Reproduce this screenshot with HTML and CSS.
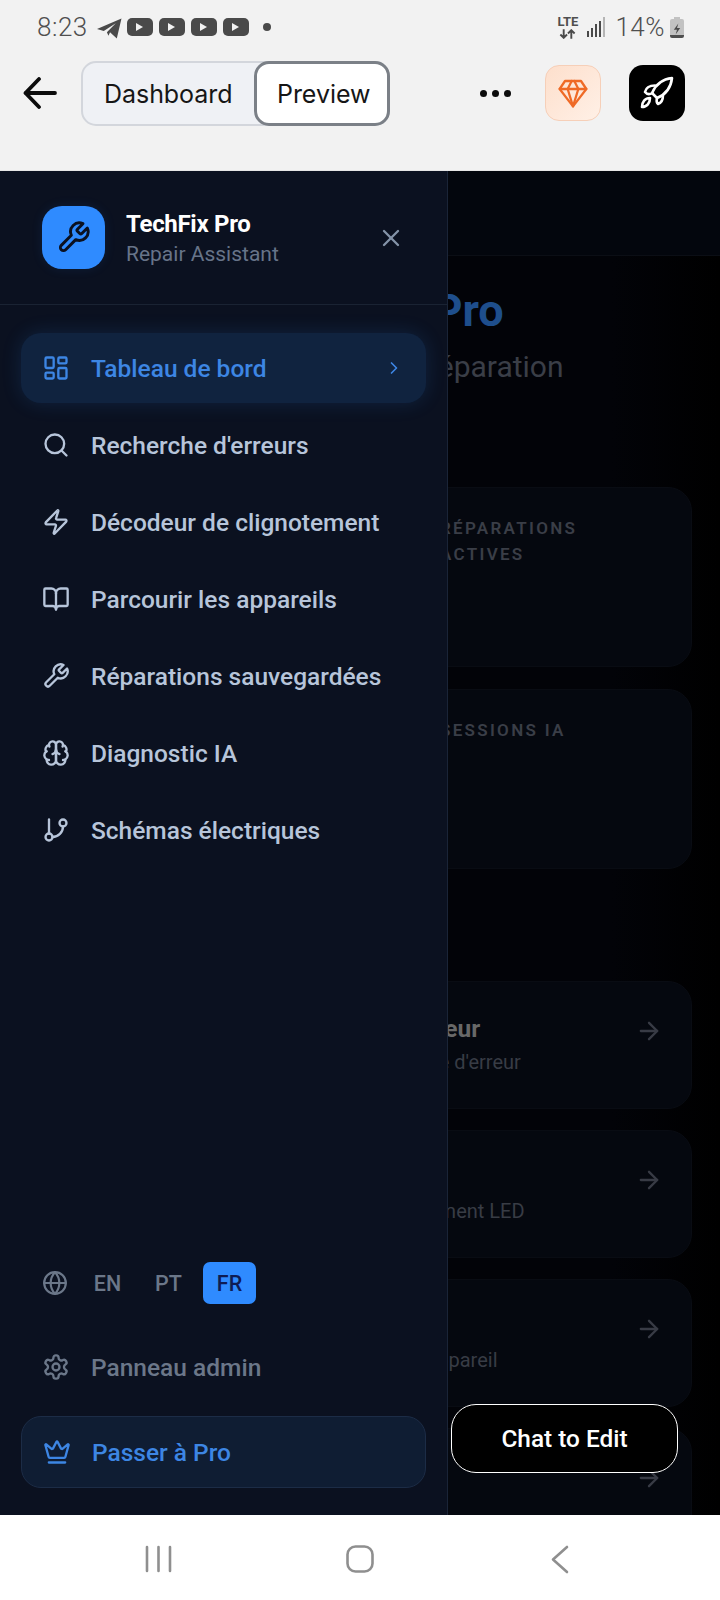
FILE: index.html
```html
<!DOCTYPE html>
<html lang="fr">
<head>
    <meta charset="UTF-8">
    <meta name="viewport" content="width=device-width, initial-scale=1.0">
    <title>TechFix Pro</title>
    <link rel="stylesheet" href="styles.css">
</head>
<body>
    <svg class="sprites" width="0" height="0">
        <symbol id="i-dashboard" viewBox="0 0 24 24"><rect x="3" y="3" width="7" height="9" rx="1"/><rect x="14" y="3" width="7" height="5" rx="1"/><rect x="14" y="12" width="7" height="9" rx="1"/><rect x="3" y="16" width="7" height="5" rx="1"/></symbol>
        <symbol id="i-search" viewBox="0 0 24 24"><circle cx="11" cy="11" r="8"/><path d="m21 21-4.3-4.3"/></symbol>
        <symbol id="i-zap" viewBox="0 0 24 24"><path d="M4 14a1 1 0 0 1-.78-1.63l9.9-10.2a.5.5 0 0 1 .86.46l-1.92 6.02A1 1 0 0 0 13 10h7a1 1 0 0 1 .78 1.63l-9.9 10.2a.5.5 0 0 1-.86-.46l1.92-6.02A1 1 0 0 0 11 14z"/></symbol>
        <symbol id="i-book" viewBox="0 0 24 24"><path d="M12 7v14"/><path d="M3 18a1 1 0 0 1-1-1V4a1 1 0 0 1 1-1h5a4 4 0 0 1 4 4 4 4 0 0 1 4-4h5a1 1 0 0 1 1 1v13a1 1 0 0 1-1 1h-6a3 3 0 0 0-3 3 3 3 0 0 0-3-3z"/></symbol>
        <symbol id="i-wrench" viewBox="0 0 24 24"><path d="M14.7 6.3a1 1 0 0 0 0 1.4l1.6 1.6a1 1 0 0 0 1.4 0l3.77-3.77a6 6 0 0 1-7.94 7.94l-6.91 6.91a2.12 2.12 0 0 1-3-3l6.91-6.91a6 6 0 0 1 7.94-7.94l-3.76 3.76z"/></symbol>
        <symbol id="i-brain" viewBox="0 0 24 24"><path d="M12 5a3 3 0 1 0-5.997.125 4 4 0 0 0-2.526 5.77 4 4 0 0 0 .556 6.588A4 4 0 1 0 12 18Z"/><path d="M12 5a3 3 0 1 1 5.997.125 4 4 0 0 1 2.526 5.77 4 4 0 0 1-.556 6.588A4 4 0 1 1 12 18Z"/><path d="M15 13a4.5 4.5 0 0 1-3-4 4.5 4.5 0 0 1-3 4"/><path d="M17.599 6.5a3 3 0 0 0 .399-1.375"/><path d="M6.003 5.125A3 3 0 0 0 6.401 6.5"/><path d="M3.477 10.896a4 4 0 0 1 .585-.396"/><path d="M19.938 10.5a4 4 0 0 1 .585.396"/><path d="M6 18a4 4 0 0 1-1.967-.516"/><path d="M19.967 17.484A4 4 0 0 1 18 18"/></symbol>
        <symbol id="i-branch" viewBox="0 0 24 24"><path d="M6 3v12"/><circle cx="18" cy="6" r="3"/><circle cx="6" cy="18" r="3"/><path d="M18 9a9 9 0 0 1-9 9"/></symbol>
        <symbol id="i-arrow" viewBox="0 0 24 24"><path d="M5 12h14"/><path d="m12 5 7 7-7 7"/></symbol>
    </svg>

    <header class="top">
        <div class="status">
            <div class="status-left">
                <span class="clock">8:23</span>
                <svg class="tg" viewBox="0 0 24 20"><path d="M0 10.500 23.500 0.500 19 19.500 12.500 13.500 11 17 9.500 13.500 18 5 6.500 12.500z"/></svg>
                <span class="yt"></span>
                <span class="yt"></span>
                <span class="yt"></span>
                <span class="yt"></span>
                <span class="dot"></span>
            </div>
            <div class="status-right">
                <span class="lte">LTE
                    <svg class="lte-arrows" viewBox="0 0 20 10"><path d="M6 0v9M2.500 5.500 6 9l3.500-3.500M14 10V1M10.500 4.500 14 1l3.500 3.500"/></svg>
                </span>
                <span class="bars"><i></i><i></i><i></i><i></i><i></i></span>
                <span class="clock">14%</span>
                <span class="battery"><svg viewBox="0 0 14 21"><path d="M8.500 5 3.500 12H7l-1.500 5 5-7H7z"/></svg></span>
            </div>
        </div>
        <div class="toolbar">
            <svg class="back" viewBox="0 0 34 32"><path d="M32 16H3"/><path d="M16 2 2.500 16 16 30"/></svg>
            <div class="tabs">
                <span class="tab">Dashboard</span>
                <span class="tab tab-on">Preview</span>
            </div>
            <div class="more"><i></i><i></i><i></i></div>
            <span class="square gem">
                <svg class="icon" viewBox="0 0 24 24"><path d="M6 3h12l4 6-10 13L2 9Z"/><path d="M11 3 8 9l4 13 4-13-3-6"/><path d="M2 9h20"/></svg>
            </span>
            <span class="square rocket">
                <svg class="icon" viewBox="0 0 34 34"><path d="M32 2C22 3 16 8 12 17l5 5c10-4 14-11 15-20z"/><path d="M15 9.500C10 9.500 6 11.500 5 16c2 2.500 5 2.500 7.500 1"/><path d="M17 22c-.5 2-1 4.500 1 6 3-1 5-4.500 5-9"/><path d="M10 22c-5 0-8 4-8 9 5 0 8-4 8-9z"/></svg>
            </span>
        </div>
    </header>

    <div class="stage">
        <div class="page">
            <div class="page-bar"></div>
            <div class="page-body">
                <h1 class="brand">TechFix <span>Pro</span></h1>
                <p class="tagline">Votre assistant de réparation</p>

                <div class="stat-card"><div class="stat-label">Réparations<br>actives</div></div>
                <div class="stat-card"><div class="stat-label">Sessions IA</div></div>

                <div class="action-list">
                    <div class="action-card">
                        <div class="action-text"><strong>Recherche d'erreur</strong><span>Recherche par code d'erreur</span></div>
                        <svg class="icon action-arrow"><use href="#i-arrow"/></svg>
                    </div>
                    <div class="action-card">
                        <div class="action-text"><strong>Décodeur</strong><span>Décodage clignotement LED</span></div>
                        <svg class="icon action-arrow"><use href="#i-arrow"/></svg>
                    </div>
                    <div class="action-card">
                        <div class="action-text"><strong>Appareils</strong><span>Sélectionner son appareil</span></div>
                        <svg class="icon action-arrow"><use href="#i-arrow"/></svg>
                    </div>
                    <div class="action-card">
                        <svg class="icon action-arrow"><use href="#i-arrow"/></svg>
                    </div>
                </div>
            </div>
        </div>

        <aside class="drawer">
            <div class="drawer-head">
                <span class="logo"><svg class="icon"><use href="#i-wrench"/></svg></span>
                <div class="drawer-title">
                    <strong>TechFix Pro</strong>
                    <span>Repair Assistant</span>
                </div>
                <svg class="icon close" viewBox="0 0 24 24"><path d="M18 6 6 18"/><path d="m6 6 12 12"/></svg>
            </div>

            <nav class="menu">
                <a class="menu-item active">
                    <svg class="icon"><use href="#i-dashboard"/></svg>
                    <span>Tableau de bord</span>
                    <svg class="icon chevron" viewBox="0 0 24 24"><path d="m9 18 6-6-6-6"/></svg>
                </a>
                <a class="menu-item"><svg class="icon"><use href="#i-search"/></svg><span>Recherche d'erreurs</span></a>
                <a class="menu-item"><svg class="icon"><use href="#i-zap"/></svg><span>Décodeur de clignotement</span></a>
                <a class="menu-item"><svg class="icon"><use href="#i-book"/></svg><span>Parcourir les appareils</span></a>
                <a class="menu-item"><svg class="icon"><use href="#i-wrench"/></svg><span>Réparations sauvegardées</span></a>
                <a class="menu-item"><svg class="icon"><use href="#i-brain"/></svg><span>Diagnostic IA</span></a>
                <a class="menu-item"><svg class="icon"><use href="#i-branch"/></svg><span>Schémas électriques</span></a>
            </nav>

            <div class="drawer-foot">
                <div class="langs">
                    <svg class="icon" viewBox="0 0 24 24"><circle cx="12" cy="12" r="10"/><path d="M12 2a14.500 14.500 0 0 0 0 20 14.500 14.500 0 0 0 0-20"/><path d="M2 12h20"/></svg>
                    <span class="lang">EN</span>
                    <span class="lang">PT</span>
                    <span class="lang lang-on">FR</span>
                </div>
                <a class="menu-item admin">
                    <svg class="icon" viewBox="0 0 24 24"><path d="M12.220 2h-.44a2 2 0 0 0-2 2v.18a2 2 0 0 1-1 1.730l-.43.25a2 2 0 0 1-2 0l-.15-.08a2 2 0 0 0-2.730.73l-.22.38a2 2 0 0 0 .73 2.730l.15.1a2 2 0 0 1 1 1.720v.51a2 2 0 0 1-1 1.740l-.15.09a2 2 0 0 0-.73 2.730l.22.38a2 2 0 0 0 2.730.73l.15-.08a2 2 0 0 1 2 0l.43.25a2 2 0 0 1 1 1.730V20a2 2 0 0 0 2 2h.44a2 2 0 0 0 2-2v-.18a2 2 0 0 1 1-1.730l.43-.25a2 2 0 0 1 2 0l.15.08a2 2 0 0 0 2.730-.73l.22-.39a2 2 0 0 0-.73-2.730l-.15-.08a2 2 0 0 1-1-1.740v-.5a2 2 0 0 1 1-1.740l.15-.09a2 2 0 0 0 .73-2.730l-.22-.38a2 2 0 0 0-2.730-.73l-.15.08a2 2 0 0 1-2 0l-.43-.25a2 2 0 0 1-1-1.730V4a2 2 0 0 0-2-2z"/><circle cx="12" cy="12" r="3"/></svg>
                    <span>Panneau admin</span>
                </a>
                <a class="menu-item upgrade">
                    <svg class="icon" viewBox="0 0 24 24"><path d="M11.562 3.266a.5.5 0 0 1 .876 0L15.390 8.870a1 1 0 0 0 1.516.294L21.183 5.500a.5.5 0 0 1 .798.519l-2.834 10.246a1 1 0 0 1-.956.734H5.810a1 1 0 0 1-.957-.734L2.020 6.020a.5.5 0 0 1 .798-.519l4.276 3.664a1 1 0 0 0 1.516-.294z"/><path d="M5 21h14"/></svg>
                    <span>Passer à Pro</span>
                </a>
            </div>
        </aside>

        <button class="chat">Chat to Edit</button>
    </div>

    <footer class="navbar">
        <svg width="27" height="28" viewBox="0 0 27 28"><path d="M2 2v24M13.500 2v24M25 2v24"/></svg>
        <svg class="nav-home" width="28" height="28" viewBox="0 0 28 28"><rect x="1.500" y="1.500" width="25" height="25" rx="8"/></svg>
        <svg width="18" height="29" viewBox="0 0 18 29"><path d="M16 2 2 14.500 16 27"/></svg>
    </footer>
</body>
</html>
```

FILE: styles.css
```css
* {
    box-sizing: border-box;
}
body {
    margin: 0;
    width: 720px;
    height: 1600px;
    display: flex;
    flex-direction: column;
    overflow: hidden;
    font-family: Roboto, "Liberation Sans", sans-serif;
    background-color: #fff;
}
.sprites {
    position: absolute;
}
.icon {
    width: 28px;
    height: 28px;
    flex: none;
    fill: none;
    stroke: currentColor;
    stroke-width: 2;
    stroke-linecap: round;
    stroke-linejoin: round;
}

/* phone status bar and app toolbar */
.top {
    height: 171px;
    flex: none;
    background-color: #f2f2f2;
    border-bottom: 1px solid #e6e6e6;
}
.status {
    height: 55px;
    padding: 0 36px 1px 37px;
    display: flex;
    align-items: center;
    justify-content: space-between;
    color: #4f4f4f;
}
.status-left,
.status-right {
    display: flex;
    align-items: center;
}
.clock {
    font-size: 26px;
    font-weight: 300;
    letter-spacing: 0.5px;
}
.tg {
    width: 25px;
    height: 21px;
    margin: 2px 5px 0 9px;
    fill: #4a4a4a;
}
.yt {
    width: 26px;
    height: 18px;
    margin-right: 6px;
    border-radius: 5px;
    background-color: #4a4a4a;
    display: flex;
    align-items: center;
    justify-content: center;
}
.yt::after {
    content: "";
    border-left: 7px solid #f2f2f2;
    border-top: 4px solid transparent;
    border-bottom: 4px solid transparent;
}
.dot {
    width: 8px;
    height: 8px;
    margin-left: 8px;
    border-radius: 50%;
    background-color: #4a4a4a;
}
.lte {
    display: flex;
    flex-direction: column;
    align-items: center;
    font-size: 13px;
    font-weight: 700;
    line-height: 12px;
    width: 22px;
    margin-left: 2px;
}
.lte-arrows {
    width: 19px;
    height: 10px;
    margin-top: 1px;
    fill: none;
    stroke: #4a4a4a;
    stroke-width: 2;
}
.bars {
    height: 20px;
    margin: 0 10px 0 8px;
    display: flex;
    align-items: flex-end;
    gap: 1.500px;
}
.bars i {
    width: 2.500px;
    background-color: #4a4a4a;
}
.bars i:nth-child(1) { height: 6px; }
.bars i:nth-child(2) { height: 9px; }
.bars i:nth-child(3) { height: 13px; }
.bars i:nth-child(4) { height: 16px; }
.bars i:nth-child(5) { height: 20px; background-color: #b5b5b5; }
.battery {
    position: relative;
    width: 14px;
    height: 19px;
    margin: 3px 0 0 5px;
    border-radius: 2px;
    background: linear-gradient(#c2c2c2 82%, #4f4f4f 82%);
}
.battery::before {
    content: "";
    position: absolute;
    top: -2px;
    left: 4px;
    width: 6px;
    height: 2px;
    background-color: #c2c2c2;
}
.battery svg {
    display: block;
    width: 14px;
    height: 19px;
    fill: #4a4a4a;
}
.toolbar {
    height: 76px;
    padding: 0 35px 0 23px;
    display: flex;
    align-items: center;
}
.back {
    width: 34px;
    height: 32px;
    flex: none;
    fill: none;
    stroke: #0c0c0c;
    stroke-width: 3.800;
    stroke-linecap: round;
    stroke-linejoin: round;
}
.tabs {
    width: 309px;
    height: 65px;
    margin-left: 24px;
    display: flex;
    border: 2px solid #d3d6dc;
    border-radius: 15px;
    background-color: #eff1f5;
    font-family: Inter, Roboto, sans-serif;
    font-size: 25px;
    color: #161616;
}
.tab {
    width: 173px;
    padding: 2px 0 0 21px;
    display: flex;
    align-items: center;
    letter-spacing: -0.050px;
}
.tab-on {
    width: 136px;
    margin: -2px;
    padding-left: 20px;
    border: 3px solid #7b8087;
    border-radius: 15px;
    background-color: #fff;
}
.more {
    margin-left: 90px;
    display: flex;
    gap: 5px;
}
.more i {
    width: 7px;
    height: 7px;
    border-radius: 50%;
    background-color: #0c0c0c;
}
.square {
    width: 56px;
    height: 56px;
    flex: none;
    border-radius: 14px;
    display: flex;
    align-items: center;
    justify-content: center;
}
.gem {
    margin-left: 34px;
    border: 1px solid #f6cfb8;
    background: linear-gradient(135deg, #fddfcc, #fff0e6);
    color: #ef6a26;
}
.gem .icon {
    width: 32px;
    height: 32px;
    stroke-width: 1.700;
}
.rocket {
    margin-left: 28px;
    background-color: #000;
    color: #fff;
}
.rocket .icon {
    width: 34px;
    height: 34px;
    stroke-width: 2.600;
}

/* page dimmed behind the drawer */
.stage {
    flex: 1;
    position: relative;
    overflow: hidden;
    background: linear-gradient(90deg, #020308 85%, #000 100%);
}
.page-bar {
    height: 85px;
    background-color: #03060d;
    border-bottom: 1px solid #0b0e15;
}
.page-body {
    padding: 0 28px;
}
.brand {
    margin: 30px 0 0 236px;
    font-size: 45px;
    line-height: 50px;
    font-weight: 700;
    color: #3a3d45;
    white-space: nowrap;
}
.brand span {
    color: #1e4e8c;
}
.tagline {
    margin: 13px 0 0 151px;
    font-size: 30px;
    line-height: 36px;
    color: #3a3e47;
    white-space: nowrap;
}
.stat-card {
    height: 180px;
    margin-top: 22px;
    padding: 27px 0 0 411px;
    border: 1px solid #090c13;
    border-radius: 24px;
    background-color: #05080f;
}
.page-body .stat-card:first-of-type {
    margin-top: 102px;
}
.stat-label {
    font-size: 17px;
    line-height: 26px;
    font-weight: 600;
    letter-spacing: 2.300px;
    text-transform: uppercase;
    color: #3a3e47;
}
.action-list {
    margin-top: 112px;
    display: flex;
    flex-direction: column;
    gap: 21px;
}
.action-card {
    height: 128px;
    padding: 35px 28px 0 244px;
    display: flex;
    justify-content: space-between;
    border: 1px solid #090c13;
    border-radius: 24px;
    background-color: #05080f;
}
.action-text {
    margin-top: -2px;
    display: flex;
    flex-direction: column;
    gap: 6px;
}
.action-text strong {
    font-size: 24.500px;
    line-height: 28px;
    font-weight: 700;
    color: #686868;
}
.action-text span {
    font-size: 20px;
    line-height: 26px;
    color: #383c45;
}
.action-arrow {
    margin-left: auto;
    color: #383b45;
}

/* drawer */
.drawer {
    position: absolute;
    top: 0;
    bottom: 0;
    left: 0;
    width: 448px;
    display: flex;
    flex-direction: column;
    background-color: #0b1120;
    border-right: 1px solid #1a2437;
    color: #b7c5da;
}
.drawer-head {
    height: 134px;
    flex: none;
    padding: 0 42px;
    display: flex;
    align-items: center;
    border-bottom: 1px solid #1a2333;
}
.logo {
    width: 63px;
    height: 63px;
    flex: none;
    border-radius: 20px;
    background-color: #2f8bff;
    color: #0b1120;
    display: flex;
    align-items: center;
    justify-content: center;
    box-shadow: 0 0 12px rgba(47, 139, 255, 0.1);
}
.logo .icon {
    width: 35px;
    height: 35px;
}
.drawer-title {
    flex: 1;
    margin-left: 21px;
    padding-top: 2px;
    display: flex;
    flex-direction: column;
}
.drawer-title strong {
    font-size: 24px;
    line-height: 30px;
    font-weight: 700;
    color: #fff;
    letter-spacing: -0.300px;
}
.drawer-title span {
    padding-top: 1px;
    font-size: 21px;
    line-height: 29px;
    color: #677489;
}
.close {
    color: #8493a8;
}
.menu {
    flex: 1;
    padding: 28px 21px 0;
    display: flex;
    flex-direction: column;
    gap: 7px;
}
.menu-item {
    height: 70px;
    flex: none;
    padding: 0 21px;
    display: flex;
    align-items: center;
    gap: 21px;
    font-size: 24.500px;
    font-weight: 500;
    border-radius: 20px;
}
.active {
    background-color: #10233f;
    color: #3d86e4;
    box-shadow: 0 0 20px rgba(47, 139, 255, 0.15);
}
.chevron {
    width: 20px;
    height: 20px;
    margin-left: auto;
    margin-right: 1px;
}
.drawer-foot {
    flex: none;
    padding: 0 21px 27px;
    display: flex;
    flex-direction: column;
}
.langs {
    height: 42px;
    padding-left: 21px;
    display: flex;
    align-items: center;
    color: #6b7789;
}
.langs .icon {
    width: 26px;
    height: 26px;
    margin-right: 13px;
}
.lang {
    width: 53px;
    height: 42px;
    margin-right: 8px;
    border-radius: 7px;
    display: flex;
    align-items: center;
    justify-content: center;
    font-size: 21.500px;
    font-weight: 500;
}
.lang-on {
    background-color: #2f8bff;
    color: #0e1c54;
}
.admin {
    margin-top: 28px;
    color: #6b7789;
}
.upgrade {
    margin-top: 14px;
    height: 72px;
    border: 1px solid #1c2c46;
    background-color: #0f1d33;
    color: #3d86e4;
}
.chat {
    position: absolute;
    right: 42px;
    bottom: 42px;
    width: 227px;
    height: 69px;
    border: 1.500px solid #fff;
    border-radius: 25px;
    background-color: #000;
    color: #fff;
    font-family: Roboto, sans-serif;
    font-size: 24.400px;
    font-weight: 500;
}

/* phone navigation bar */
.navbar {
    height: 85px;
    flex: none;
    padding: 3px 151px 0 145px;
    display: flex;
    align-items: center;
    justify-content: space-between;
    background-color: #fff;
}
.navbar svg {
    fill: none;
    stroke: #8f8f8f;
    stroke-width: 2.600;
    stroke-linecap: round;
    stroke-linejoin: round;
}
.nav-home {
    margin-right: 4px;
}
```
